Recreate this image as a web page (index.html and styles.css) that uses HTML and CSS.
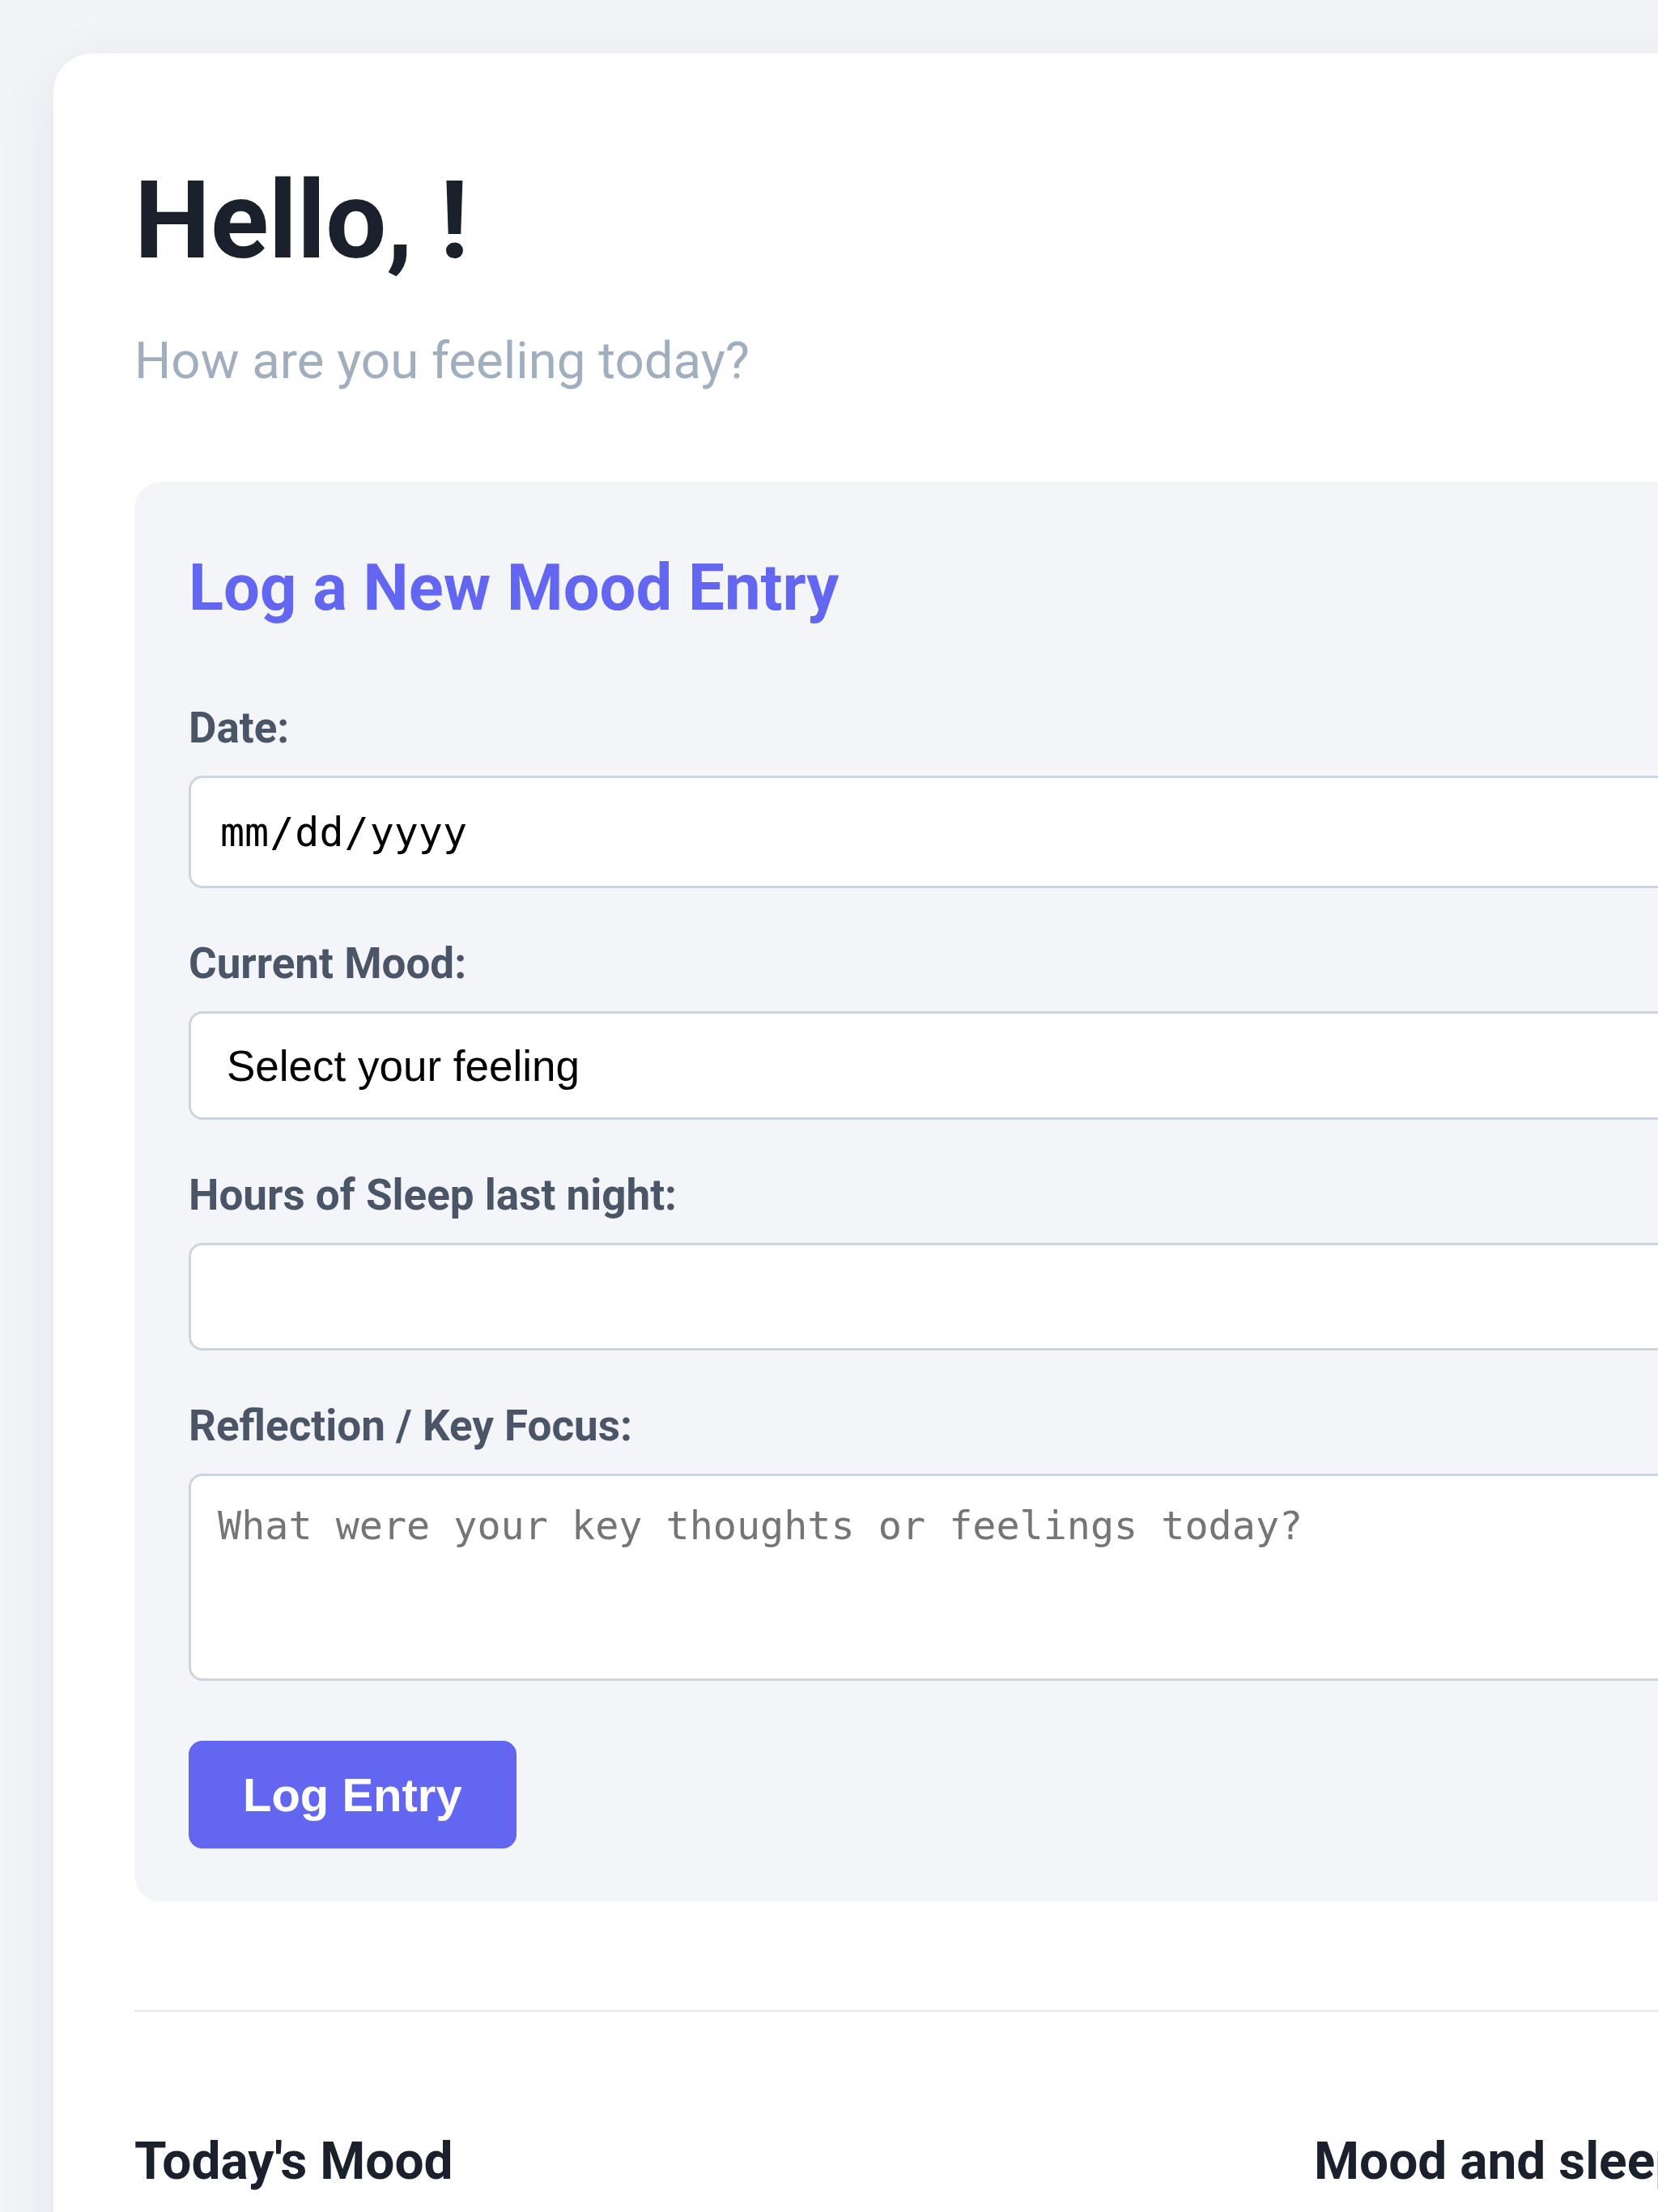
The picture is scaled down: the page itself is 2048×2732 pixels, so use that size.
FILE: index.html
```html
<!DOCTYPE html>
<html>
<head lang="en">
    <meta charset="UTF-8">
    <title>Mood Tracker</title>
    <link rel="stylesheet" href="styles.css">
</head>
<body>
<div class="container">
    <h1 class="greeting">Hello, <span id="username"></span>!</h1>
    <p class="subtitle">How are you feeling today?</p>

    <div class="entry-form">
        <h2>Log a New Mood Entry</h2>
        <form id="mood-form">
            <div class="form-group">
                <label for="date">Date:</label>
                <input type="date" id="date" class="field field-date">
            </div>
            <div class="form-group">
                <label for="mood">Current Mood:</label>
                <select id="mood" class="field field-select">
                    <option value="">Select your feeling</option>
                    <option value="happy">Happy</option>
                    <option value="calm">Calm</option>
                    <option value="tired">Tired</option>
                    <option value="sad">Sad</option>
                    <option value="anxious">Anxious</option>
                </select>
            </div>
            <div class="form-group">
                <label for="sleep">Hours of Sleep last night:</label>
                <input type="number" id="sleep" class="field field-number" min="0" max="24" step="0.5">
            </div>
            <div class="form-group last">
                <label for="note">Reflection / Key Focus:</label>
                <textarea id="note" class="field field-text" placeholder="What were your key thoughts or feelings today?"></textarea>
            </div>
            <button type="submit" class="btn">Log Entry</button>
        </form>
    </div>

    <hr class="divider">

    <div class="summary">
        <div class="summary-item">
            <h3>Today's Mood</h3>
        </div>
        <div class="summary-item">
            <h3>Mood and sleep</h3>
        </div>
    </div>
</div>
</body>
</html>
```

FILE: styles.css
```css
body {
    margin: 0;
    background-color: #f3f4f8;
    font-family: Roboto, "Liberation Sans", sans-serif;
    overflow-x: hidden;
}

.container {
    width: 3000px;
    margin: 66px;
    padding: 129px 100px 100px;
    box-sizing: border-box;
    background-color: #fff;
    border-radius: 48px;
    box-shadow: 0 20px 80px rgba(20, 30, 60, 0.07);
}

.greeting {
    margin: 0 0 58px;
    font-size: 133px;
    font-weight: 700;
    line-height: normal;
    color: #1a202c;
}

.subtitle {
    margin: 0 0 112px;
    font-size: 63.6px;
    line-height: normal;
    color: #a0aec0;
}

.entry-form {
    padding: 66px 67px;
    background-color: #f4f5f9;
    border-radius: 33px;
}

.entry-form h2 {
    margin: 18px 0 96px;
    font-size: 79.6px;
    font-weight: 700;
    line-height: normal;
    color: #6366f1;
}

.form-group {
    margin-bottom: 62px;
}

.form-group.last {
    margin-bottom: 74px;
}

.form-group label {
    display: block;
    margin-bottom: 28px;
    font-size: 53px;
    font-weight: 700;
    line-height: normal;
    color: #4a5568;
}

.field {
    display: block;
    width: 100%;
    box-sizing: border-box;
    margin: 0;
    padding: 0 33px;
    border: 3px solid #cbd5e0;
    border-radius: 17px;
    background-color: #fff;
    color: #000;
    font-family: "Liberation Sans", Arial, sans-serif;
    font-size: 53px;
}

.field-date {
    height: 139px;
    padding-left: 35px;
    font-family: "DejaVu Sans Mono", monospace;
    font-size: 50px;
}

.field-select {
    height: 134px;
    padding-left: 40px;
}

.field-number {
    height: 133px;
}

.field-text {
    height: 256px;
    padding: 33px;
    font-family: "DejaVu Sans Mono", monospace;
    font-size: 48.4px;
    resize: vertical;
}

.field-text::placeholder {
    color: #757575;
}

.btn {
    display: block;
    height: 133px;
    padding: 0 67px;
    border: none;
    border-radius: 17px;
    background-color: #6366f1;
    color: #fff;
    font-family: "Liberation Sans", Arial, sans-serif;
    font-size: 58px;
    font-weight: 700;
    cursor: pointer;
}

.divider {
    margin: 133px 0 0;
    border: none;
    border-top: 3px solid #edeef1;
}

.summary {
    display: grid;
    grid-template-columns: 1357px 1fr;
    column-gap: 100px;
    margin-top: 147px;
}

.summary-item h3 {
    margin: 0;
    font-size: 64px;
    font-weight: 700;
    line-height: normal;
    color: #1a202c;
}
```
